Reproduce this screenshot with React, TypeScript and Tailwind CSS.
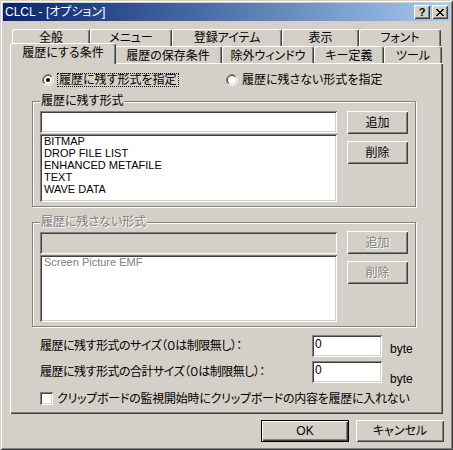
import React from "react"

const font =
  "font-['Liberation_Sans','Noto_Sans_CJK_JP',sans-serif] [font-feature-settings:'palt']"
const raised =
  "shadow-[inset_1px_1px_#fff,inset_-1px_-1px_#404040,inset_2px_2px_#d4d0c8,inset_-2px_-2px_#808080]"
const sunken =
  "shadow-[inset_1px_1px_#808080,inset_-1px_-1px_#fff,inset_2px_2px_#404040,inset_-2px_-2px_#d4d0c8]"
const etched = "border border-[#808080] shadow-[1px_1px_0_#fff,inset_1px_1px_0_#fff]"
const emboss = "text-[#808080] [text-shadow:1px_1px_0_#fff]"

const closeGlyph = [
  "XX....XX",
  ".XX..XX.",
  "..XXXX..",
  "...XX...",
  "..XXXX..",
  ".XX..XX.",
  "XX....XX",
]

function CloseIcon() {
  return (
    <svg width="8" height="7" viewBox="0 0 8 7" shapeRendering="crispEdges">
      {closeGlyph.map((row, y) =>
        row.split("").map((c, x) =>
          c === "X" ? <rect key={`${x}-${y}`} x={x} y={y} width="1" height="1" fill="#000" /> : null
        )
      )}
    </svg>
  )
}

function Radio({ id, checked }: { id: string; checked?: boolean }) {
  return (
    <svg width="12" height="12" viewBox="0 0 12 12" className="shrink-0">
      <defs>
        <linearGradient id={`${id}o`} x1="0" y1="0" x2="1" y2="1">
          <stop offset="0.5" stopColor="#808080" />
          <stop offset="0.5" stopColor="#ffffff" />
        </linearGradient>
        <linearGradient id={`${id}i`} x1="0" y1="0" x2="1" y2="1">
          <stop offset="0.5" stopColor="#404040" />
          <stop offset="0.5" stopColor="#d4d0c8" />
        </linearGradient>
      </defs>
      <circle cx="6" cy="6" r="5.5" fill="none" stroke={`url(#${id}o)`} />
      <circle cx="6" cy="6" r="4.5" fill="#fff" stroke={`url(#${id}i)`} />
      {checked && <circle cx="6" cy="6" r="2" fill="#000" />}
    </svg>
  )
}

function Btn({ label, disabled, className = "" }: { label: string; disabled?: boolean; className?: string }) {
  return (
    <div
      className={`flex h-[23px] w-[61px] items-center justify-center bg-[#d4d0c8] ${raised} ${
        disabled ? emboss : ""
      } ${className}`}
    >
      {label}
    </div>
  )
}

function Tab({ label, className }: { label: string; className: string }) {
  return (
    <div
      className={`flex h-[17px] shrink-0 items-center justify-center rounded-t-[3px] border-t border-r border-l border-t-white border-r-[#404040] border-l-white bg-[#d4d0c8] shadow-[inset_-1px_0_#808080] ${className}`}
    >
      {label}
    </div>
  )
}

export default function App() {
  const formats = ["BITMAP", "DROP FILE LIST", "ENHANCED METAFILE", "TEXT", "WAVE DATA"]

  return (
    <div
      className={`h-[450px] w-[453px] bg-[#d4d0c8] p-[3px] text-[12px] leading-[14px] text-black ${font} shadow-[inset_1px_1px_#d4d0c8,inset_-1px_-1px_#404040,inset_2px_2px_#fff,inset_-2px_-2px_#808080]`}
    >
      {/* title bar */}
      <div className="flex h-[18px] items-center bg-linear-to-r from-[#0a246a] to-[#a6caf0]">
        <div className="pl-[2px] text-white">CLCL - [オプション]</div>
        <div className="mr-[2px] ml-auto flex gap-[2px]">
          <div
            className={`flex h-[14px] w-[16px] items-center justify-center bg-[#d4d0c8] text-[11px] leading-none font-bold ${raised}`}
          >
            ?
          </div>
          <div className={`flex h-[14px] w-[16px] items-center justify-center bg-[#d4d0c8] ${raised}`}>
            <CloseIcon />
          </div>
        </div>
      </div>

      <div className="mt-[8px] ml-[7px] w-[433px]">
        {/* tabs */}
        <div className="flex h-[17px] pl-[2px]">
          <Tab label="全般" className="w-[78px]" />
          <Tab label="メニュー" className="w-[82px]" />
          <Tab label="登録アイテム" className="w-[110px]" />
          <Tab label="表示" className="w-[77px]" />
          <Tab label="フォント" className="w-[82px]" />
        </div>
        <div className="flex h-[17px] items-end pl-[2px]">
          <div className="relative z-10 -mx-[2px] -mb-[1px] flex h-[21px] w-[106px] shrink-0 items-center justify-center rounded-t-[3px] border-t border-r border-l border-t-white border-r-[#404040] border-l-white bg-[#d4d0c8] pb-[2px] shadow-[inset_-1px_0_#808080]">
            履歴にする条件
          </div>
          <Tab label="履歴の保存条件" className="w-[108px] pt-[2px]" />
          <Tab label="除外ウィンドウ" className="w-[92px] pt-[2px]" />
          <Tab label="キー定義" className="w-[70px] pt-[2px]" />
          <Tab label="ツール" className="w-[58px] pt-[2px]" />
        </div>

        {/* panel */}
        <div className="h-[351px] w-[433px] bg-[#d4d0c8] pt-[10px] shadow-[inset_1px_1px_#fff,inset_-1px_-1px_#404040,inset_-2px_-2px_#808080]">
          <div className="flex h-[14px] items-center">
            <div className="ml-[32px] flex w-[184px] items-center">
              <Radio id="r1" checked />
              <span className="ml-[3px] border border-dotted border-black pr-[1px] pl-[1px] leading-[12px]">
                履歴に残す形式を指定
              </span>
            </div>
            <div className="flex items-center">
              <Radio id="r2" />
              <span className="ml-[4px]">履歴に残さない形式を指定</span>
            </div>
          </div>

          {/* group 1 */}
          <div className={`mt-[14px] ml-[22px] h-[106px] w-[384px] ${etched}`}>
            <div className="-mt-[8px] ml-[7px] w-fit bg-[#d4d0c8] px-[1px]">履歴に残す形式</div>
            <div className="mt-[3px] ml-[7px] flex">
              <div className="flex w-[297px] flex-col">
                <div className={`h-[22px] bg-white ${sunken}`} />
                <div className={`mt-[1px] h-[68px] bg-white pt-[1px] pl-[4px] text-[11px] leading-[12px] ${sunken}`}>
                  {formats.map((f) => (
                    <div key={f}>{f}</div>
                  ))}
                </div>
              </div>
              <div className="ml-[10px] flex flex-col gap-[7px]">
                <Btn label="追加" />
                <Btn label="削除" />
              </div>
            </div>
          </div>

          {/* group 2 */}
          <div className={`mt-[15px] ml-[22px] h-[105px] w-[384px] ${etched}`}>
            <div className={`-mt-[8px] ml-[7px] w-fit bg-[#d4d0c8] px-[1px] ${emboss}`}>履歴に残さない形式</div>
            <div className="mt-[3px] ml-[7px] flex">
              <div className="flex w-[297px] flex-col">
                <div className={`h-[22px] bg-[#d4d0c8] ${sunken}`} />
                <div
                  className={`mt-[1px] h-[67px] bg-white pt-[1px] pl-[4px] text-[11px] leading-[12px] text-[#808080] ${sunken}`}
                >
                  Screen Picture EMF
                </div>
              </div>
              <div className="-mt-[1px] ml-[10px] flex flex-col gap-[7px]">
                <Btn label="追加" disabled />
                <Btn label="削除" disabled />
              </div>
            </div>
          </div>

          {/* sizes */}
          <div className="mt-[8px] ml-[30px] flex h-[22px] items-center">
            <div className="w-[272px] tracking-[-0.5px]">履歴に残す形式のサイズ（０は制限無し）：</div>
            <div className={`h-[22px] w-[70px] bg-white pt-[3px] pl-[3px] leading-[12px] ${sunken}`}>0</div>
            <div className="ml-[8px] self-end pb-[1px]">byte</div>
          </div>
          <div className="mt-[4px] ml-[30px] flex h-[22px] items-center">
            <div className="w-[272px] tracking-[-0.5px]">履歴に残す形式の合計サイズ（０は制限無し）：</div>
            <div className={`h-[22px] w-[70px] bg-white pt-[3px] pl-[3px] leading-[12px] ${sunken}`}>0</div>
            <div className="-mb-[3px] ml-[8px] self-end">byte</div>
          </div>

          <div className="mt-[9px] ml-[30px] flex h-[13px] items-center">
            <div className={`h-[13px] w-[13px] shrink-0 bg-white ${sunken}`} />
            <span className="ml-[4px] tracking-[-0.25px]">
              クリップボードの監視開始時にクリップボードの内容を履歴に入れない
            </span>
          </div>
        </div>
      </div>

      {/* footer */}
      <div className="mt-[6px] mr-[6px] flex justify-end gap-[7px]">
        <div
          className={`flex h-[22px] w-[88px] items-center justify-center bg-[#d4d0c8] shadow-[inset_0_0_0_1px_#000,inset_2px_2px_#fff,inset_-2px_-2px_#404040,inset_-3px_-3px_#808080]`}
        >
          OK
        </div>
        <div className={`flex h-[22px] w-[88px] items-center justify-center bg-[#d4d0c8] ${raised}`}>
          キャンセル
        </div>
      </div>
    </div>
  )
}
